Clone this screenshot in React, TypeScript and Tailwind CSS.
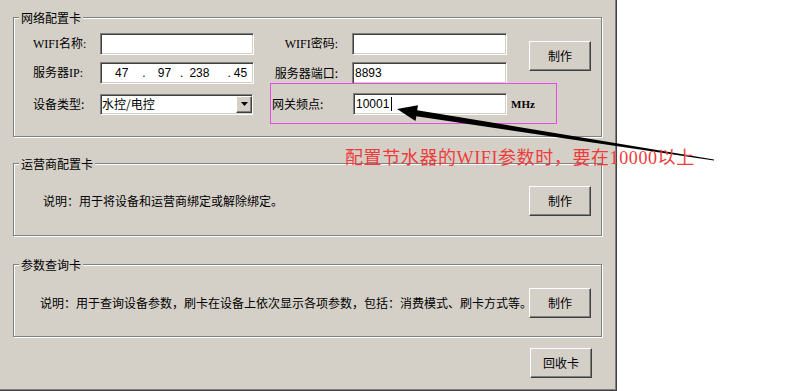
const sunken =
  "shrink-0 bg-white border border-t-[#808080] border-l-[#808080] border-r-white border-b-white shadow-[inset_1px_1px_0_#404040,inset_-1px_-1px_0_#d4d0c8]";
const raised =
  "shrink-0 bg-[#d4d0c8] border border-t-white border-l-white border-r-[#404040] border-b-[#404040] shadow-[inset_-1px_-1px_0_#808080]";

function Btn({ label }: { label: string }) {
  return (
    <button
      className={`${raised} w-[62px] h-[30px] flex items-center justify-center text-[12px] leading-none text-black`}
    >
      {label}
    </button>
  );
}

function Group({
  title,
  className,
  children,
}: {
  title: string;
  className: string;
  children: React.ReactNode;
}) {
  return (
    <div
      className={`w-[589px] shrink-0 flex flex-col border border-[#808080] shadow-[1px_1px_0_#fff,inset_1px_1px_0_#fff] ${className}`}
    >
      <span className="-mt-[7px] ml-[5px] px-[2px] w-fit bg-[#d4d0c8] text-[12px] leading-[14px]">
        {title}
      </span>
      {children}
    </div>
  );
}

export default function App() {
  return (
    <div className="relative w-[802px] h-[391px] overflow-hidden bg-white text-black font-['Noto_Sans_CJK_SC',sans-serif]">
      {/* window */}
      <div className="w-[617px] h-[391px] flex flex-col pl-[13px] pt-[17px] bg-[#d4d0c8] shadow-[inset_-1px_-1px_0_#404040,inset_-2px_-2px_0_#808080]">
        {/* 网络配置卡 */}
        <Group title="网络配置卡" className="h-[120px]">
          <div className="flex mt-[8px] pl-[19px]">
            <div className="w-[496px] shrink-0 flex flex-col text-[12px]">
              <div className="flex items-center h-[22px]">
                <span className="w-[67px] shrink-0 font-['Liberation_Serif','Noto_Sans_CJK_SC',serif]">WIFI名称:</span>
                <div className={`${sunken} w-[154px] h-[22px]`} />
                <span className="ml-[18px] w-[80px] shrink-0 pr-[14px] text-right font-['Liberation_Serif','Noto_Sans_CJK_SC',serif]">
                  WIFI密码:
                </span>
                <div className={`${sunken} w-[155px] h-[22px]`} />
              </div>
              <div className="flex items-center h-[22px] mt-[7px]">
                <span className="w-[67px] shrink-0 font-['Liberation_Serif','Noto_Sans_CJK_SC',serif]">服务器IP:</span>
                <div
                  className={`${sunken} w-[154px] h-[22px] flex items-center font-['Liberation_Sans',sans-serif] text-[12px]`}
                >
                  <span className="ml-[14px]">47</span>
                  <span className="ml-[14px]">.</span>
                  <span className="ml-[12px]">97</span>
                  <span className="ml-[9px]">.</span>
                  <span className="ml-[6px]">238</span>
                  <span className="ml-[18px]">.</span>
                  <span className="ml-[3px]">45</span>
                </div>
                <span className="ml-[18px] w-[80px] shrink-0 pr-[14px] text-right">服务器端口:</span>
                <div
                  className={`${sunken} w-[155px] h-[22px] flex items-center pl-[2px] font-['Liberation_Sans',sans-serif]`}
                >
                  8893
                </div>
              </div>
              <div className="flex items-center h-[22px] mt-[9px]">
                <span className="w-[67px] shrink-0">设备类型:</span>
                <div className={`${sunken} w-[153px] h-[21px] flex items-center justify-between`}>
                  <span className="pl-[1px] text-[12px]">水控/电控</span>
                  <div className={`${raised} w-[16px] h-[17px] flex items-center justify-center`}>
                    <svg width="7" height="4" viewBox="0 0 7 4">
                      <path d="M0 0h7L3.5 4z" fill="#000" />
                    </svg>
                  </div>
                </div>
                <span className="ml-[19px] w-[81px] shrink-0">网关频点:</span>
                <div
                  className={`${sunken} w-[154px] h-[22px] flex items-center pl-[2px] font-['Liberation_Sans',sans-serif]`}
                >
                  10001
                  <span className="ml-[2px] w-[1px] h-[14px] bg-black" />
                </div>
                <span className="ml-[4px] shrink-0 text-[11px] font-bold font-['Liberation_Serif',serif]">MHz</span>
              </div>
            </div>
            <div className="mt-[8px]">
              <Btn label="制作" />
            </div>
          </div>
        </Group>

        {/* 运营商配置卡 */}
        <Group title="运营商配置卡" className="h-[73px] mt-[26px]">
          <div className="flex items-center mt-[15px] pl-[29px] pr-[10px]">
            <span className="flex-1 min-w-0 text-[12px]">说明：用于将设备和运营商绑定或解除绑定。</span>
            <Btn label="制作" />
          </div>
        </Group>

        {/* 参数查询卡 */}
        <Group title="参数查询卡" className="h-[73px] mt-[28px]">
          <div className="flex items-center mt-[16px] pl-[26px] pr-[10px]">
            <span className="flex-1 min-w-0 text-[12px] whitespace-nowrap">
              说明：用于查询设备参数，刷卡在设备上依次显示各项参数，包括：消费模式、刷卡方式等。
            </span>
            <Btn label="制作" />
          </div>
        </Group>

        <div className="w-[589px] flex justify-end pr-[10px] mt-[11px]">
          <Btn label="回收卡" />
        </div>
      </div>

      {/* annotations */}
      <div className="absolute left-[270px] top-[83px] w-[287px] h-[41px] border border-[#e64ce6]" />
      <svg className="absolute inset-0 pointer-events-none" width="802" height="391" viewBox="0 0 802 391">
        <polygon
          points="397,109 418,105.3 417.2,110.2 714.1,159.4 713.9,160.6 416.3,116.2 415.5,121.1"
          fill="#000"
        />
      </svg>
      <span className="absolute left-[345px] top-[148px] text-[18px] leading-[21px] tracking-[0.6px] text-[#ee3b3b] whitespace-nowrap font-['Liberation_Serif','Noto_Sans_CJK_SC',serif]">
        配置节水器的WIFI参数时，要在10000以上
      </span>
    </div>
  );
}
